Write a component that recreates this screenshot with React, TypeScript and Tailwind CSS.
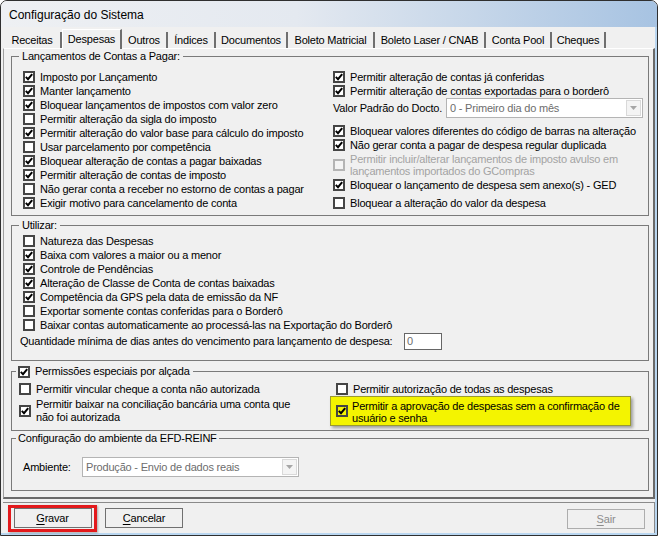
import React from "react";

function Check({ checked, disabled }: { checked?: boolean; disabled?: boolean }) {
  return (
    <span
      className={`flex h-[12px] w-[12px] shrink-0 items-center justify-center border-2 ${
        disabled ? "border-[#b4b4b4] bg-[#f4f4f4]" : "border-[#454545] bg-white"
      }`}
    >
      {checked && (
        <svg width="8" height="8" viewBox="0 0 8 8">
          <path d="M0.8 3.9 L3 6.2 L7.2 1.2" fill="none" stroke="#000" strokeWidth="2" />
        </svg>
      )}
    </span>
  );
}

function Row({
  label,
  checked,
  disabled,
  className = "",
}: {
  label: React.ReactNode;
  checked?: boolean;
  disabled?: boolean;
  className?: string;
}) {
  return (
    <div className={`flex h-[14px] items-center gap-[5px] whitespace-nowrap ${className}`}>
      <Check checked={checked} disabled={disabled} />
      <span className={disabled ? "text-[#a3a3a3]" : ""}>{label}</span>
    </div>
  );
}

function Select({ value, className = "" }: { value: string; className?: string }) {
  return (
    <div className={`flex h-[20px] items-center border border-[#b4b4b4] bg-white ${className}`}>
      <span className="flex-1 truncate pl-[3px] text-[#6d6d6d]">{value}</span>
      <span className="mr-[1px] flex h-[16px] w-[15px] items-center justify-center border border-[#d9d9d9] bg-[#f4f4f4]">
        <svg width="7" height="4" viewBox="0 0 7 4">
          <path d="M0 0h7L3.5 4z" fill="#a6a6a6" />
        </svg>
      </span>
    </div>
  );
}

function Button({ label, disabled, className = "" }: { label: string; disabled?: boolean; className?: string }) {
  return (
    <div
      className={`flex h-[20px] w-[78px] items-center justify-center border bg-[#f0f0f0] ${
        disabled ? "border-[#adadad] text-[#8c8c8c]" : "border-[#707070]"
      } ${className}`}
    >
      <span>
        <span className="underline underline-offset-[2px]">{label[0]}</span>
        {label.slice(1)}
      </span>
    </div>
  );
}

const tabs: [string, number][] = [
  ["Receitas", 58],
  ["Despesas", 60],
  ["Outros", 46],
  ["Índices", 48],
  ["Documentos", 72],
  ["Boleto Matricial", 87],
  ["Boleto Laser / CNAB", 111],
  ["Conta Pool", 66],
  ["Cheques", 54],
];

const leftRows: [string, boolean][] = [
  ["Imposto por Lançamento", true],
  ["Manter lançamento", true],
  ["Bloquear lançamentos de impostos com valor zero", true],
  ["Permitir alteração da sigla do imposto", false],
  ["Permitir alteração do valor base para cálculo do imposto", true],
  ["Usar parcelamento por competência", false],
  ["Bloquear alteração de contas a pagar baixadas", true],
  ["Permitir alteração de contas de imposto", true],
  ["Não gerar conta a receber no estorno de contas a pagar", false],
  ["Exigir motivo para cancelamento de conta", true],
];

const utilRows: [string, boolean][] = [
  ["Natureza das Despesas", false],
  ["Baixa com valores a maior ou a menor", true],
  ["Controle de Pendências", true],
  ["Alteração de Classe de Conta de contas baixadas", true],
  ["Competência da GPS pela data de emissão da NF", true],
  ["Exportar somente contas conferidas para o Borderô", false],
  ["Baixar contas automaticamente ao processá-las na Exportação do Borderô", false],
];

export default function App() {
  return (
    <div className="h-[538px] w-[658px] bg-white font-['Liberation_Sans',Arial,sans-serif] text-[11px] tracking-[-0.2px] text-black">
      <div className="flex h-[536px] w-[658px] flex-col overflow-hidden rounded-t-[7px] border border-[#2f2f2f] bg-[#f0f0f0]">
        {/* title bar */}
        <div className="flex h-[26px] shrink-0 items-center bg-[linear-gradient(to_right,#eef0f3_0%,#e4e9f0_45%,#a7c3e2_100%)] pt-[1px] pl-[8px] text-[12px] tracking-normal">
          Configuração do Sistema
        </div>

        <div className="flex flex-1 flex-col border-r-2 border-b-2 border-[#b9d6f0] pl-[2px]">
          {/* tabs */}
          <div className="flex h-[21px] shrink-0 items-end pl-[1px]">
            {tabs.map(([name, w]) =>
              name === "Despesas" ? (
                <div
                  key={name}
                  style={{ width: w }}
                  className="relative z-10 -mb-px flex h-[20px] items-center justify-center border-t border-l border-r-2 border-t-white border-l-white border-r-[#6e6e6e] bg-[#f0f0f0] pb-[1px]"
                >
                  {name}
                </div>
              ) : (
                <div
                  key={name}
                  style={{ width: w }}
                  className="flex h-[16px] items-center justify-center border-r-2 border-[#6f6f6f]"
                >
                  {name}
                </div>
              )
            )}
          </div>

          {/* tab panel */}
          <div className="flex h-[451px] w-[652px] shrink-0 flex-col border-t border-l border-r-2 border-b-2 border-t-white border-l-[#a0a0a0] border-r-[#6a6a6a] border-b-[#6a6a6a]">
            {/* group 1 */}
            <fieldset className="mt-[1px] ml-[7px] h-[166px] w-[638px] border border-[#7a7a7a]">
              <legend className="ml-[7px] px-[3px] leading-[13px]">Lançamentos de Contas a Pagar:</legend>
              <div className="flex pt-[7px] pl-[11px]">
                <div className="flex w-[310px] flex-col">
                  {leftRows.map(([l, c]) => (
                    <Row key={l} label={l} checked={c} />
                  ))}
                </div>
                <div className="flex flex-col">
                  <Row label="Permitir alteração de contas já conferidas" checked />
                  <Row label="Permitir alteração de contas exportadas para o borderô" checked />
                  <div className="flex h-[20px] items-center">
                    <span className="w-[113px] whitespace-nowrap">Valor Padrão do Docto.</span>
                    <Select value="0 - Primeiro dia do mês" className="w-[197px]" />
                  </div>
                  <Row className="mt-[6px]" label="Bloquear valores diferentes do código de barras na alteração" checked />
                  <Row label="Não gerar conta a pagar de despesa regular duplicada" checked />
                  <div className="flex h-[26px] items-center gap-[5px]">
                    <Check disabled />
                    <span className="leading-[12px] text-[#a3a3a3]">
                      Permitir incluir/alterar lançamentos de imposto avulso em
                      <br />
                      lançamentos importados do GCompras
                    </span>
                  </div>
                  <Row label="Bloquear o lançamento de despesa sem anexo(s) - GED" checked />
                  <Row className="mt-[4px]" label="Bloquear a alteração do valor da despesa" />
                </div>
              </div>
            </fieldset>

            {/* group 2 */}
            <fieldset className="mt-[3px] ml-[7px] h-[142px] w-[638px] border border-[#7a7a7a]">
              <legend className="ml-[7px] px-[3px] leading-[13px]">Utilizar:</legend>
              <div className="flex flex-col pt-[2px] pl-[11px]">
                {utilRows.map(([l, c]) => (
                  <Row key={l} label={l} checked={c} />
                ))}
                <div className="-ml-[3px] flex h-[18px] items-center">
                  <span className="w-[384px] whitespace-nowrap">
                    Quantidade mínima de dias antes do vencimento para lançamento de despesa:
                  </span>
                  <div className="flex h-[17px] w-[38px] items-center border border-[#666] bg-white pl-[2px] text-[#6d6d6d]">
                    0
                  </div>
                </div>
              </div>
            </fieldset>

            {/* group 3 */}
            <fieldset className="mt-[4px] ml-[7px] h-[66px] w-[638px] border border-[#7a7a7a]">
              <legend className="ml-[4px] pr-[3px] pl-[2px] leading-[13px]">
                <span className="flex items-center gap-[5px]">
                  <Check checked />
                  Permissões especiais por alçada
                </span>
              </legend>
              <div className="flex pt-[4px] pl-[7px]">
                <div className="flex w-[311px] flex-col">
                  <Row label="Permitir vincular cheque a conta não autorizada" />
                  <div className="mt-[2px] flex h-[26px] items-center gap-[5px]">
                    <Check checked />
                    <span className="leading-[13px]">
                      Permitir baixar na conciliação bancária uma conta que
                      <br />
                      não foi autorizada
                    </span>
                  </div>
                </div>
                <div className="flex flex-col">
                  <Row className="ml-[6px]" label="Permitir autorização de todas as despesas" />
                  <div className="flex h-[30px] w-[301px] items-center gap-[4px] border border-[#9a9a30] bg-[#f4f400] pl-[5px] shadow-[2px_2px_3px_rgba(0,0,0,0.35)]">
                    <span className="flex h-[12px] w-[12px] shrink-0 items-center justify-center border-2 border-[#454545]">
                      <svg width="8" height="8" viewBox="0 0 8 8">
                        <path d="M0.8 3.9 L3 6.2 L7.2 1.2" fill="none" stroke="#000" strokeWidth="2" />
                      </svg>
                    </span>
                    <span className="pt-[2px] leading-[12px]">
                      Permitir a aprovação de despesas sem a confirmação de
                      <br />
                      usuário e senha
                    </span>
                  </div>
                </div>
              </div>
            </fieldset>

            {/* group 4 */}
            <fieldset className="mt-[1px] ml-[7px] h-[59px] w-[638px] border border-[#7a7a7a]">
              <legend className="ml-[4px] px-[2px] leading-[13px]">Configuração do ambiente da EFD-REINF</legend>
              <div className="flex items-center pt-[12px] pl-[11px]">
                <span className="w-[59px]">Ambiente:</span>
                <Select value="Produção - Envio de dados reais" className="w-[217px]" />
              </div>
            </fieldset>
          </div>

          {/* bottom buttons */}
          <div className="mt-[3px] flex h-[31px] w-[652px] items-start border-t border-r border-[#8a8a8a] pt-[2px] pl-[5px]">
            <div className="flex h-[27px] w-[89px] items-start justify-center border-[3px] border-[#e3191c] shadow-[1px_1px_2px_rgba(0,0,0,0.3)]">
              <Button label="Gravar" />
            </div>
            <Button label="Cancelar" className="mt-[3px] ml-[8px]" />
            <Button label="Sair" disabled className="mt-[4px] mr-[9px] ml-auto" />
          </div>
        </div>
      </div>
    </div>
  );
}
